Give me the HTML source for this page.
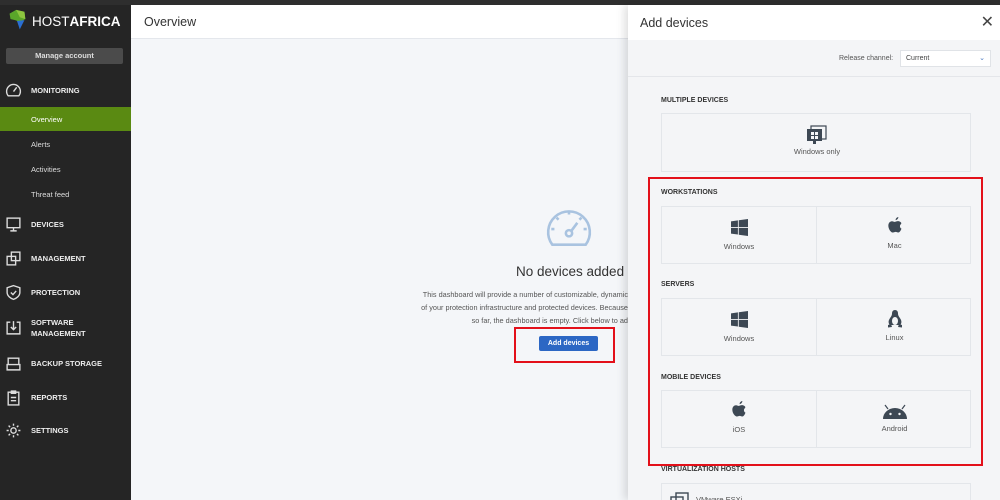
<!DOCTYPE html>
<html style="overflow:hidden;width:1000px;height:500px"><head><meta charset="utf-8"><style>
*{box-sizing:border-box;margin:0;padding:0}
body{width:1000px;height:500px;overflow:hidden;background:#f4f6f9;font-family:"Liberation Sans",sans-serif;position:relative}
.top{position:absolute;left:0;top:0;width:1000px;height:5px;background:#2e2e2e}
.side{position:absolute;left:0;top:5px;width:131px;height:495px;background:#252525;color:#e8e8e8;overflow:hidden}
.logo{position:absolute;left:5px;top:5px;height:22px;display:flex;align-items:center}
.logo span{font-size:13.5px;color:#fff;margin-left:3px;letter-spacing:0}
.mbtn{position:absolute;left:6px;top:43px;width:117px;height:16px;background:#4b4b4b;border-radius:2px;font-size:7.5px;font-weight:bold;text-align:center;line-height:16px;color:#ddd}
.it{position:absolute;left:31px;font-size:7.5px;font-weight:bold;color:#eee}
.sub{position:absolute;left:31px;font-size:7.5px;color:#ddd}
.ic{position:absolute;left:5px;width:17px;height:17px}
.ov{position:absolute;left:0;top:102px;width:131px;height:24px;background:#5a8a12}
.main{position:absolute;left:131px;top:5px;width:497px;height:495px;overflow:hidden}
.mh{height:34px;background:#fff;border-bottom:1px solid #e4e7ec;font-size:12.5px;color:#333;padding:10px 0 0 13px}
.panel{position:absolute;left:628px;top:5px;width:372px;height:495px;background:#f4f5f7;box-shadow:-4px 0 8px rgba(0,0,0,.12);overflow:hidden}
.ph{height:35px;background:#fff;font-size:12.5px;color:#333;padding:11px 0 0 12px}
.lab{position:absolute;left:33px;font-size:7px;font-weight:bold;color:#333}
.card{position:absolute;left:33px;width:310px;background:#f4f5f7;border:1px solid #e3e6ea;font-size:7.5px;color:#555}
.card .c{position:absolute;top:0;height:100%;text-align:center}
.red{position:absolute;border:2px solid #e3101a}
</style></head><body>
<div class="top"></div>
<div class="side">
 <div class="logo"><svg width="24" height="26" viewBox="0 0 22 28"><path d="M3 6 L10 2 L19 4 L20 12 L14 15 L9 13 L4 12Z" fill="#5aa62a"/><path d="M11 14 L19 13 L14 23Z" fill="#2a6ed2"/><path d="M10 2 L19 4 L20 12 L14 10Z" fill="#8dc63f"/></svg><span>HOST<b>AFRICA</b></span></div>
 <div class="mbtn">Manage account</div>
 <svg class="ic" style="top:77px" viewBox="0 0 16 16" fill="none" stroke="#ddd" stroke-width="1.3"><path d="M3 13 A6.5 6.5 0 1 1 13 13 Z"/><path d="M8 9 L11 5"/></svg>
 <div class="it" style="top:81px">MONITORING</div>
 <div class="ov"></div>
 <div class="sub" style="top:110px;color:#fff">Overview</div>
 <div class="sub" style="top:135px">Alerts</div>
 <div class="sub" style="top:160px">Activities</div>
 <div class="sub" style="top:185px">Threat feed</div>
 <svg class="ic" style="top:211px" viewBox="0 0 16 16" fill="none" stroke="#ddd" stroke-width="1.3"><rect x="2" y="2" width="12" height="9"/><path d="M8 11v3M5 14h6"/></svg>
 <div class="it" style="top:215px">DEVICES</div>
 <svg class="ic" style="top:245px" viewBox="0 0 16 16" fill="none" stroke="#ddd" stroke-width="1.3"><rect x="2" y="6" width="8" height="8"/><rect x="6" y="2" width="8" height="8"/></svg>
 <div class="it" style="top:249px">MANAGEMENT</div>
 <svg class="ic" style="top:279px" viewBox="0 0 16 16" fill="none" stroke="#ddd" stroke-width="1.3"><path d="M8 1.5L14 3.5V8c0 3-3 5.5-6 6.5C5 13.5 2 11 2 8V3.5Z"/><path d="M5.5 8l2 2 3-3.5"/></svg>
 <div class="it" style="top:283px">PROTECTION</div>
 <svg class="ic" style="top:314px" viewBox="0 0 16 16" fill="none" stroke="#ddd" stroke-width="1.3"><path d="M5 3H2v11h12V3h-3"/><path d="M8 2v8M5.5 7.5L8 10l2.5-2.5"/></svg>
 <div class="it" style="top:312px;line-height:11px">SOFTWARE<br>MANAGEMENT</div>
 <svg class="ic" style="top:350px" viewBox="0 0 16 16" fill="none" stroke="#ddd" stroke-width="1.3"><path d="M3 9V3h10v6M2 9h12v5H2z"/></svg>
 <div class="it" style="top:354px">BACKUP STORAGE</div>
 <svg class="ic" style="top:384px" viewBox="0 0 16 16" fill="none" stroke="#ddd" stroke-width="1.3"><rect x="3" y="3" width="10" height="12"/><path d="M6 2h4v2H6zM5.5 8h5M5.5 11h5"/></svg>
 <div class="it" style="top:388px">REPORTS</div>
 <svg class="ic" style="top:417px" viewBox="0 0 16 16" fill="none" stroke="#ddd" stroke-width="1.3"><circle cx="8" cy="8" r="2.5"/><path d="M8 1.5v2M8 12.5v2M1.5 8h2M12.5 8h2M3.4 3.4l1.4 1.4M11.2 11.2l1.4 1.4M3.4 12.6l1.4-1.4M11.2 4.8l1.4-1.4"/></svg>
 <div class="it" style="top:421px">SETTINGS</div>
</div>
<div class="main">
 <div class="mh">Overview</div>
 <svg style="position:absolute;left:413px;top:200px" width="50" height="44" viewBox="0 0 48 42" fill="none" stroke="#a9c3e0" stroke-width="2.5"><path d="M8 38 A20 20 0 1 1 40 38 Z"/><circle cx="24" cy="27" r="3"/><path d="M26 25 L32 17"/><path d="M24 6v3M7 23h3M38 23h3M12 12l2 2M36 12l-2 2"/></svg>
 <div style="position:absolute;left:385px;top:259px;font-size:13.5px;color:#333">No devices added</div>
 <div style="position:absolute;left:260px;top:283px;width:237px;font-size:7.3px;color:#555;line-height:13px;text-align:right;white-space:nowrap;overflow:hidden">
  This dashboard will provide a number of customizable, dynamic<br>of your protection infrastructure and protected devices. Because<br>so far, the dashboard is empty. Click below to ad</div>
 <div style="position:absolute;left:408px;top:331px;width:59px;height:15px;background:#2c67c4;border-radius:2px;color:#fff;font-size:7px;font-weight:bold;text-align:center;line-height:15px">Add devices</div>
 <div class="red" style="left:383px;top:322px;width:101px;height:36px"></div>
</div>
<div class="panel">
 <div class="ph">Add devices<span style="position:absolute;right:6px;top:7px;font-size:16px;color:#444">✕</span></div>
 <div style="position:absolute;left:0;top:36px;width:372px;height:36px;border-bottom:1px solid #e4e6ea">
  <span style="position:absolute;left:211px;top:14px;font-size:7px;color:#555">Release channel:</span>
  <div style="position:absolute;left:272px;top:9px;width:91px;height:17px;background:#fff;border:1px solid #e0e3e7;font-size:7px;color:#444;padding:4px 0 0 5px">Current<span style="position:absolute;right:5px;top:3px;color:#4a79c0;font-size:7px">⌄</span></div>
 </div>
 <div class="lab" style="top:92px">MULTIPLE DEVICES</div>
 <div class="card" style="top:108px;height:59px"><div class="c" style="left:0;width:310px">
  <svg style="margin-top:11px" width="22" height="20" viewBox="0 0 22 20"><rect x="5" y="1" width="15" height="13" fill="none" stroke="#3d4854" stroke-width="1.2"/><rect x="1" y="4" width="15" height="12" fill="#3d4854"/><rect x="7" y="16" width="3" height="3" fill="#3d4854"/><path d="M5 7h3v3H5zM9 7h3v3H9zM5 11h3v3H5zM9 11h3v3H9z" fill="#f4f5f7"/></svg>
  <div>Windows only</div></div></div>
 <div class="red" style="left:20px;top:172px;width:335px;height:289px"></div>
 <div class="lab" style="top:184px">WORKSTATIONS</div>
 <div class="card" style="top:201px;height:58px">
  <div class="c" style="left:0;width:155px;border-right:1px solid #e3e6ea"><svg style="margin-top:12px" width="17" height="17" viewBox="0 0 16 16" fill="#3d4854"><path d="M0 2.2L6.5 1.3v6.2H0zM7.3 1.2L16 0v7.5H7.3zM0 8.3h6.5v6.3L0 13.8zM7.3 8.3H16V16l-8.7-1.2z"/></svg><div style="margin-top:4px">Windows</div></div>
  <div class="c" style="left:155px;width:155px"><svg style="margin-top:10px" width="18" height="20" viewBox="0 0 16 18" fill="#3d4854"><path d="M11 0c.1 1.2-.9 2.7-2.4 2.8C8.4 1.5 9.6.2 11 0zM13.6 6.2c-1.5.9-1.6 3.4.2 4.3-.4 1.3-1.5 3.5-2.8 3.5-1 0-1.3-.6-2.4-.6-1.2 0-1.5.6-2.5.6C4.4 14 2 11 2 7.8c0-2.6 1.7-4 3.3-4 1 0 1.8.6 2.5.6.6 0 1.6-.7 2.8-.7.5 0 2 .1 3 1.5z"/></svg><div style="margin-top:2px">Mac</div></div>
 </div>
 <div class="lab" style="top:276px">SERVERS</div>
 <div class="card" style="top:293px;height:58px">
  <div class="c" style="left:0;width:155px;border-right:1px solid #e3e6ea"><svg style="margin-top:12px" width="17" height="17" viewBox="0 0 16 16" fill="#3d4854"><path d="M0 2.2L6.5 1.3v6.2H0zM7.3 1.2L16 0v7.5H7.3zM0 8.3h6.5v6.3L0 13.8zM7.3 8.3H16V16l-8.7-1.2z"/></svg><div style="margin-top:4px">Windows</div></div>
  <div class="c" style="left:155px;width:155px"><svg style="margin-top:10px" width="16" height="20" viewBox="0 0 16 20"><path d="M8 1c-2 0-3 1.5-3 3.5 0 2-1 3-2.5 5.5C1 12.5 1.5 15 3 16h10c1.5-1 2-3.5.5-6C12 7.5 11 6.5 11 4.5 11 2.5 10 1 8 1z" fill="#3d4854"/><ellipse cx="8" cy="12" rx="3" ry="4" fill="#f4f5f7"/><path d="M1 16l3-1 1 3-4 .5zM15 16l-3-1-1 3 4 .5z" fill="#3d4854"/></svg><div style="margin-top:2px">Linux</div></div>
 </div>
 <div class="lab" style="top:369px">MOBILE DEVICES</div>
 <div class="card" style="top:385px;height:58px">
  <div class="c" style="left:0;width:155px;border-right:1px solid #e3e6ea"><svg style="margin-top:10px" width="18" height="20" viewBox="0 0 16 18" fill="#3d4854"><path d="M11 0c.1 1.2-.9 2.7-2.4 2.8C8.4 1.5 9.6.2 11 0zM13.6 6.2c-1.5.9-1.6 3.4.2 4.3-.4 1.3-1.5 3.5-2.8 3.5-1 0-1.3-.6-2.4-.6-1.2 0-1.5.6-2.5.6C4.4 14 2 11 2 7.8c0-2.6 1.7-4 3.3-4 1 0 1.8.6 2.5.6.6 0 1.6-.7 2.8-.7.5 0 2 .1 3 1.5z"/></svg><div style="margin-top:2px">iOS</div></div>
  <div class="c" style="left:155px;width:155px"><svg style="margin-top:13px" width="26" height="16" viewBox="0 0 26 16"><path d="M1 15A12 11 0 0 1 25 15Z" fill="#3d4854"/><path d="M6 5L3 1M20 5l3-4" stroke="#3d4854" stroke-width="1.2"/><circle cx="8.5" cy="10" r="1.2" fill="#f4f5f7"/><circle cx="17.5" cy="10" r="1.2" fill="#f4f5f7"/></svg><div style="margin-top:2px">Android</div></div>
 </div>
 <div class="lab" style="top:461px">VIRTUALIZATION HOSTS</div>
 <div class="card" style="top:478px;height:30px"><svg style="position:absolute;left:8px;top:8px" width="20" height="16" viewBox="0 0 20 16" fill="none" stroke="#3d4854" stroke-width="1.4"><rect x="6" y="1" width="12" height="10"/><rect x="1" y="5" width="12" height="10"/></svg><span style="position:absolute;left:34px;top:11px">VMware ESXi</span></div>
</div>
</body></html>
